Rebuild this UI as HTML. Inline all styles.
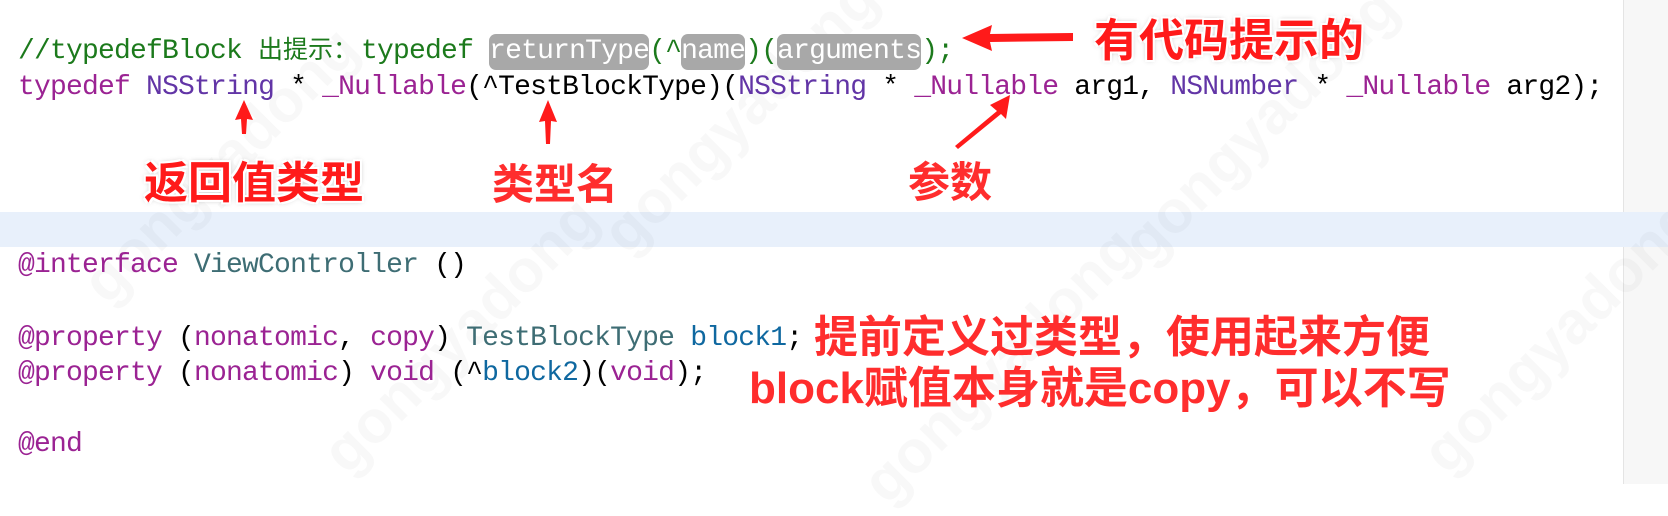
<!DOCTYPE html>
<html><head><meta charset="utf-8"><style>
html,body{margin:0;padding:0}
body{width:1668px;height:484px;position:relative;overflow:hidden;background:#fff;font-family:"Liberation Mono","Noto Sans CJK SC",monospace;}
.gut{position:absolute;left:1623px;top:0;width:45px;height:484px;background:#f7f7f7;border-left:1px solid #e4e4e4}
.band{position:absolute;left:0;top:212px;width:1668px;height:35px;background:#e8f0fb}
.l{position:absolute;left:18px;height:36px;line-height:36px;font-size:28px;letter-spacing:-0.8px;white-space:pre;color:#000}
.c{color:#1c7a1c}.k{color:#9b2393}.t{color:#6235a6}.v{color:#3e6d74}.b{color:#0f68a0}
.h{display:inline-block;background:#a8a8a8;color:#fff;border-radius:7px;height:36px;line-height:36px}
.cj{display:inline-block;width:103px;font-family:"Noto Sans CJK SC",sans-serif;font-size:25px;letter-spacing:0}
.a{position:absolute;font-family:"Liberation Sans","Noto Sans CJK SC",sans-serif;font-weight:bold;color:#ff1a1a;font-size:44px;line-height:44px;white-space:nowrap;
text-shadow:-2px -2px 0 #fff,2px -2px 0 #fff,-2px 2px 0 #fff,2px 2px 0 #fff,0 0 6px rgba(0,0,0,.35)}
.a2{position:absolute;font-family:"Noto Sans CJK SC",sans-serif;font-weight:bold;color:#ff2d2d;font-size:42px;line-height:42px;white-space:nowrap}
.wm{position:absolute;font-family:"Liberation Sans",sans-serif;font-weight:bold;font-size:60px;color:rgba(0,0,0,.028);transform:rotate(-45deg);white-space:nowrap}
</style></head><body>
<div class="gut"></div>
<div class="band"></div>
<div class="wm" style="left:40px;top:130px">gongyadong</div>
<div class="wm" style="left:560px;top:80px">gongyadong</div>
<div class="wm" style="left:1080px;top:90px">gongyadong</div>
<div class="wm" style="left:280px;top:300px">gongyadong</div>
<div class="wm" style="left:820px;top:330px">gongyadong</div>
<div class="wm" style="left:1380px;top:300px">gongyadong</div>

<div class="l c" style="top:30px">//typedefBlock <span class="cj">出提示：</span>typedef <span class="h">returnType</span>(^<span class="h">name</span>)(<span class="h">arguments</span>);</div>
<div class="l" style="top:70px"><span class="k">typedef</span> <span class="t">NSString</span> * <span class="k">_Nullable</span>(^TestBlockType)(<span class="t">NSString</span> * <span class="k">_Nullable</span> arg1, <span class="t">NSNumber</span> * <span class="k">_Nullable</span> arg2);</div>
<div class="l" style="top:248px"><span class="k">@interface</span> <span class="v">ViewController</span> ()</div>
<div class="l" style="top:321px"><span class="k">@property</span> (<span class="k">nonatomic</span>, <span class="k">copy</span>) <span class="v">TestBlockType</span> <span class="b">block1</span>;</div>
<div class="l" style="top:356px"><span class="k">@property</span> (<span class="k">nonatomic</span>) <span class="k">void</span> (^<span class="b">block2</span>)(<span class="k">void</span>);</div>
<div class="l" style="top:427px"><span class="k">@end</span></div>

<svg style="position:absolute;left:0;top:0" width="1668" height="484">
<polygon points="962,38 992,25 990,34 1073,33 1073,41 990,42 992,51" fill="#ff1a1a"/>
<polygon points="244,100 235,120 241,119 242,134 246,134 247,119 253,120" fill="#ff1a1a"/>
<polygon points="548,100 539,122 545,121 546,144 550,144 551,121 557,122" fill="#ff1a1a"/>
<polygon points="1010,95 990,105 997,111 955,146 958,149 1001,114 1006,119" fill="#ff1a1a"/>
</svg>

<div class="a" style="left:1094px;top:19px;font-size:45px">有代码提示的</div>
<div class="a" style="left:144px;top:162px">返回值类型</div>
<div class="a2" style="left:492px;top:161px">类型名</div>
<div class="a2" style="left:908px;top:159px">参数</div>
<div class="a2" style="left:814px;top:311px;font-size:44px;line-height:44px">提前定义过类型，使用起来方便</div>
<div class="a2" style="left:749px;top:362px;font-size:44px;line-height:44px"><span style="font-family:'Liberation Sans',sans-serif">block</span>赋值本身就是<span style="font-family:'Liberation Sans',sans-serif">copy</span>，可以不写</div>
</body></html>
